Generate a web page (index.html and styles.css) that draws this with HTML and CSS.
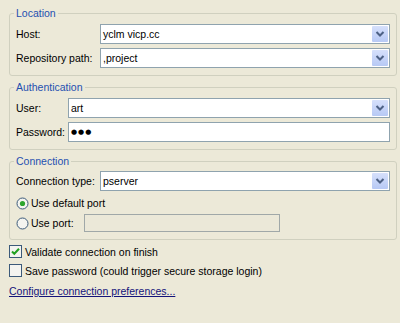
FILE: index.html
```html
<!DOCTYPE html>
<html lang="en">
<head>
  <meta charset="UTF-8" />
  <title>CVS Repository Location</title>
  <link rel="stylesheet" href="styles.css">
</head>
<body>
  <div class="page">
    <fieldset class="group">
      <legend>Location</legend>
      <div class="rows cols-wide">
        <label>Host:</label>
        <div class="combo"><span class="combo-text">yclm vicp.cc</span><span class="drop"><svg width="16" height="16" viewBox="0 0 16 16"><path d="M4.5 6 L8 9.5 L11.5 6" fill="none" stroke="#4d6185" stroke-width="2"/></svg></span></div>
        <label>Repository path:</label>
        <div class="combo"><span class="combo-text">,project</span><span class="drop"><svg width="16" height="16" viewBox="0 0 16 16"><path d="M4.5 6 L8 9.5 L11.5 6" fill="none" stroke="#4d6185" stroke-width="2"/></svg></span></div>
      </div>
    </fieldset>

    <fieldset class="group">
      <legend>Authentication</legend>
      <div class="rows cols-narrow">
        <label>User:</label>
        <div class="combo"><span class="combo-text">art</span><span class="drop"><svg width="16" height="16" viewBox="0 0 16 16"><path d="M4.5 6 L8 9.5 L11.5 6" fill="none" stroke="#4d6185" stroke-width="2"/></svg></span></div>
        <label>Password:</label>
        <div class="combo"><span class="combo-text dots">●●●</span></div>
      </div>
    </fieldset>

    <fieldset class="group">
      <legend>Connection</legend>
      <div class="rows rows-tight cols-wide">
        <label>Connection type:</label>
        <div class="combo"><span class="combo-text">pserver</span><span class="drop"><svg width="16" height="16" viewBox="0 0 16 16"><path d="M4.5 6 L8 9.5 L11.5 6" fill="none" stroke="#4d6185" stroke-width="2"/></svg></span></div>
      </div>
      <div class="radio-row">
        <svg class="radio" width="13" height="13" viewBox="0 0 13 13"><circle cx="6.5" cy="6.5" r="5.5" fill="#f4f4f0" stroke="#3c5a7a"/><circle cx="6.5" cy="6.5" r="2.6" fill="#2da52d"/></svg>
        <span>Use default port</span>
      </div>
      <div class="radio-row port-row">
        <div class="port-label">
          <svg class="radio" width="13" height="13" viewBox="0 0 13 13"><circle cx="6.5" cy="6.5" r="5.5" fill="#f4f4f0" stroke="#3c5a7a"/></svg>
          <span>Use port:</span>
        </div>
        <div class="port-field"></div>
      </div>
    </fieldset>

    <div class="check-row">
      <svg width="13" height="13" viewBox="0 0 13 13"><rect x="0.5" y="0.5" width="12" height="12" fill="#f4f4f0" stroke="#3c5a7a"/><path d="M3 6.5 L5.3 8.8 L10 3.8" fill="none" stroke="#21a121" stroke-width="2"/></svg>
      <span>Validate connection on finish</span>
    </div>
    <div class="check-row">
      <svg width="13" height="13" viewBox="0 0 13 13"><rect x="0.5" y="0.5" width="12" height="12" fill="#f4f4f0" stroke="#3c5a7a"/></svg>
      <span>Save password (could trigger secure storage login)</span>
    </div>
    <a class="prefs-link" href="#">Configure connection preferences...</a>
  </div>
</body>
</html>
```

FILE: styles.css
```css
body {
  margin: 0;
  background: #ece9d8;
  font-family: 'Liberation Sans', Arial, sans-serif;
  font-size: 10.5px;
  color: #000;
}
.page {
  padding: 7px 3px 0 9px;
}
.group {
  margin: 0 0 5px;
  padding: 0 6px 7px 6px;
  border: 1px solid #d0d0bf;
  border-radius: 3px;
}
.group legend {
  color: #1f50b0;
  line-height: 13px;
  padding: 0 2px;
  margin-left: -2px;
}
.rows {
  display: grid;
  row-gap: 4px;
  align-items: center;
  padding-top: 4px;
}
.rows-tight {
  padding-top: 3px;
}
.cols-wide {
  grid-template-columns: 84px 1fr;
}
.cols-narrow {
  grid-template-columns: 52px 1fr;
}
.combo {
  height: 20px;
  box-sizing: border-box;
  background: #fff;
  border: 1px solid #8fa3ae;
  display: flex;
  align-items: center;
}
.combo-text {
  flex: 1;
  padding-left: 2px;
}
.dots {
  font-size: 7px;
  letter-spacing: 1px;
  font-family: 'DejaVu Sans', sans-serif;
}
.drop {
  width: 16px;
  height: 16px;
  margin-right: 1px;
  background: linear-gradient(#d6e0fb, #b7c9f5);
  border-radius: 1px;
  display: flex;
}
.radio-row {
  display: flex;
  align-items: center;
  gap: 2px;
  height: 14px;
  margin-top: 5px;
}
.radio {
  flex: none;
}
.port-row {
  height: 18px;
  margin-top: 4px;
  gap: 0;
}
.port-label {
  width: 68px;
  display: flex;
  align-items: center;
  gap: 2px;
}
.port-field {
  width: 196px;
  height: 18px;
  box-sizing: border-box;
  border: 1px solid #a0a8a8;
  background: #ebe8d8;
}
.check-row {
  display: flex;
  align-items: center;
  gap: 3px;
  height: 13px;
  margin: 0 0 6px;
}
.prefs-link {
  display: inline-block;
  margin-top: 2px;
  color: #13137a;
  text-decoration: underline;
}
```
